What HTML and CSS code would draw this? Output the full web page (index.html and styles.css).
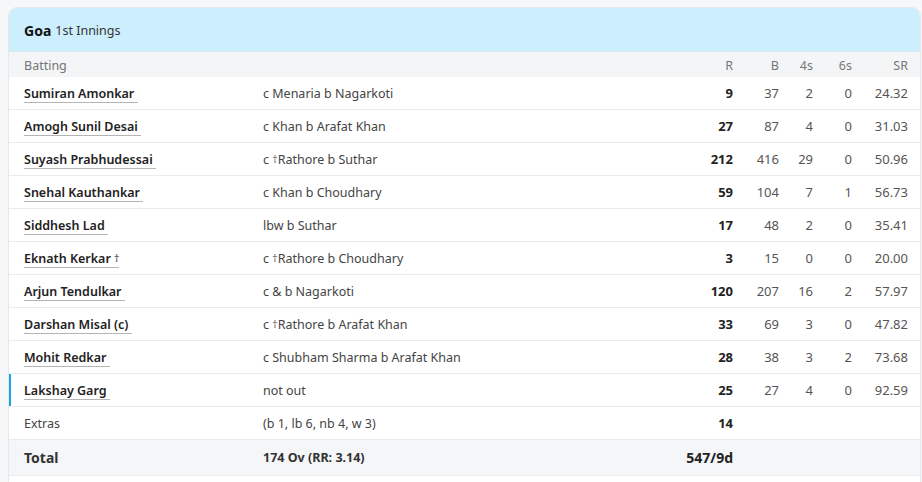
FILE: index.html
```html
<!DOCTYPE html>
<html lang="en">
<head>
<meta charset="utf-8">
<title>Scorecard</title>
<link rel="stylesheet" href="styles.css">
</head>
<body>
<div class="page">
  <section class="card">
    <header class="card-head"><span class="team">Goa</span> <span class="inn">1st Innings</span></header>
    <div class="row head-row">
      <div>Batting</div><div></div><div class="num">R</div><div class="num">B</div><div class="num">4s</div><div class="num">6s</div><div class="num">SR</div>
    </div>
    <div class="row"><div><a class="name">Sumiran Amonkar </a></div><div class="dis">c Menaria b Nagarkoti</div><div class="num runs">9</div><div class="num">37</div><div class="num">2</div><div class="num">0</div><div class="num">24.32</div></div>
    <div class="row"><div><a class="name">Amogh Sunil Desai </a></div><div class="dis">c Khan b Arafat Khan</div><div class="num runs">27</div><div class="num">87</div><div class="num">4</div><div class="num">0</div><div class="num">31.03</div></div>
    <div class="row"><div><a class="name">Suyash Prabhudessai </a></div><div class="dis">c <span class="dg">†</span>Rathore b Suthar</div><div class="num runs">212</div><div class="num">416</div><div class="num">29</div><div class="num">0</div><div class="num">50.96</div></div>
    <div class="row"><div><a class="name">Snehal Kauthankar </a></div><div class="dis">c Khan b Choudhary</div><div class="num runs">59</div><div class="num">104</div><div class="num">7</div><div class="num">1</div><div class="num">56.73</div></div>
    <div class="row"><div><a class="name">Siddhesh Lad </a></div><div class="dis">lbw b Suthar</div><div class="num runs">17</div><div class="num">48</div><div class="num">2</div><div class="num">0</div><div class="num">35.41</div></div>
    <div class="row"><div><a class="name">Eknath Kerkar <span class="dg">†</span></a></div><div class="dis">c <span class="dg">†</span>Rathore b Choudhary</div><div class="num runs">3</div><div class="num">15</div><div class="num">0</div><div class="num">0</div><div class="num">20.00</div></div>
    <div class="row"><div><a class="name">Arjun Tendulkar </a></div><div class="dis">c &amp; b Nagarkoti</div><div class="num runs">120</div><div class="num">207</div><div class="num">16</div><div class="num">2</div><div class="num">57.97</div></div>
    <div class="row"><div><a class="name">Darshan Misal (c) </a></div><div class="dis">c <span class="dg">†</span>Rathore b Arafat Khan</div><div class="num runs">33</div><div class="num">69</div><div class="num">3</div><div class="num">0</div><div class="num">47.82</div></div>
    <div class="row"><div><a class="name">Mohit Redkar </a></div><div class="dis">c Shubham Sharma b Arafat Khan</div><div class="num runs">28</div><div class="num">38</div><div class="num">3</div><div class="num">2</div><div class="num">73.68</div></div>
    <div class="row active"><div><a class="name">Lakshay Garg </a></div><div class="dis">not out</div><div class="num runs">25</div><div class="num">27</div><div class="num">4</div><div class="num">0</div><div class="num">92.59</div></div>
    <div class="row"><div class="extras">Extras</div><div class="dis">(b 1, lb 6, nb 4, w 3)</div><div class="num runs">14</div><div></div><div></div><div></div><div></div></div>
    <div class="row total-row"><div class="total">Total</div><div class="overs">174 Ov (RR: 3.14)</div><div class="num score">547/9d</div><div></div><div></div><div></div><div></div></div>
    <div class="foot"></div>
  </section>
</div>
</body>
</html>
```
FILE: styles.css
```css
* { box-sizing: border-box; }
html, body { margin: 0; background: #f6f7f9; }
body {
  font-family: "Noto Sans", "Open Sans", sans-serif;
  font-size: 13px;
  color: #333;
}
.page { padding: 7px 0 0 8px; }
.card {
  width: 913px;
  background: #fff;
  border: 1px solid #e6e8eb;
  border-radius: 9px 9px 0 0;
  overflow: hidden;
}
.card-head {
  height: 44px;
  background: #cdeefc;
  display: flex;
  align-items: center;
  padding: 2px 15px 0;
  gap: 4px;
  border-bottom: 1px solid #d7e9f2;
}
.team { font-weight: 700; font-size: 14px; color: #111; }
.inn { font-size: 12.5px; color: #333; }
.row {
  display: grid;
  grid-template-columns: 239px 1fr 60px 46px 34px 39px 56px;
  align-items: center;
  height: 33px;
  padding: 0 12px 0 15px;
  border-bottom: 1px solid #e9ebee;
}
.head-row {
  height: 25px;
  padding-top: 2px;
  background: #f4f5f7;
  color: #757575;
  font-size: 12.5px;
  border-bottom: none;
}
.num { text-align: right; color: #555; }
.head-row .num { color: #777; }
.name {
  font-weight: 600;
  color: #222;
  font-size: 12.5px;
  text-decoration: none;
  border-bottom: 1px solid #b5b5b5;
  padding-bottom: 0;
  white-space: pre;
}
.dis { color: #444; font-size: 12.5px; }
.dg { font-size: 10.5px; color: #666; vertical-align: 1px; }
.runs { font-weight: 700; color: #222; }
.active { box-shadow: inset 2px 0 0 #1aa3e8; }
.extras { color: #444; font-size: 12.5px; }
.total-row { height: 36px; background: #f5f6f8; }
.total { font-weight: 700; font-size: 14px; color: #333; }
.overs { font-weight: 700; color: #333; font-size: 12.5px; }
.score { font-weight: 700; color: #222; font-size: 14px; white-space: nowrap; }
.foot { height: 10px; }
```
